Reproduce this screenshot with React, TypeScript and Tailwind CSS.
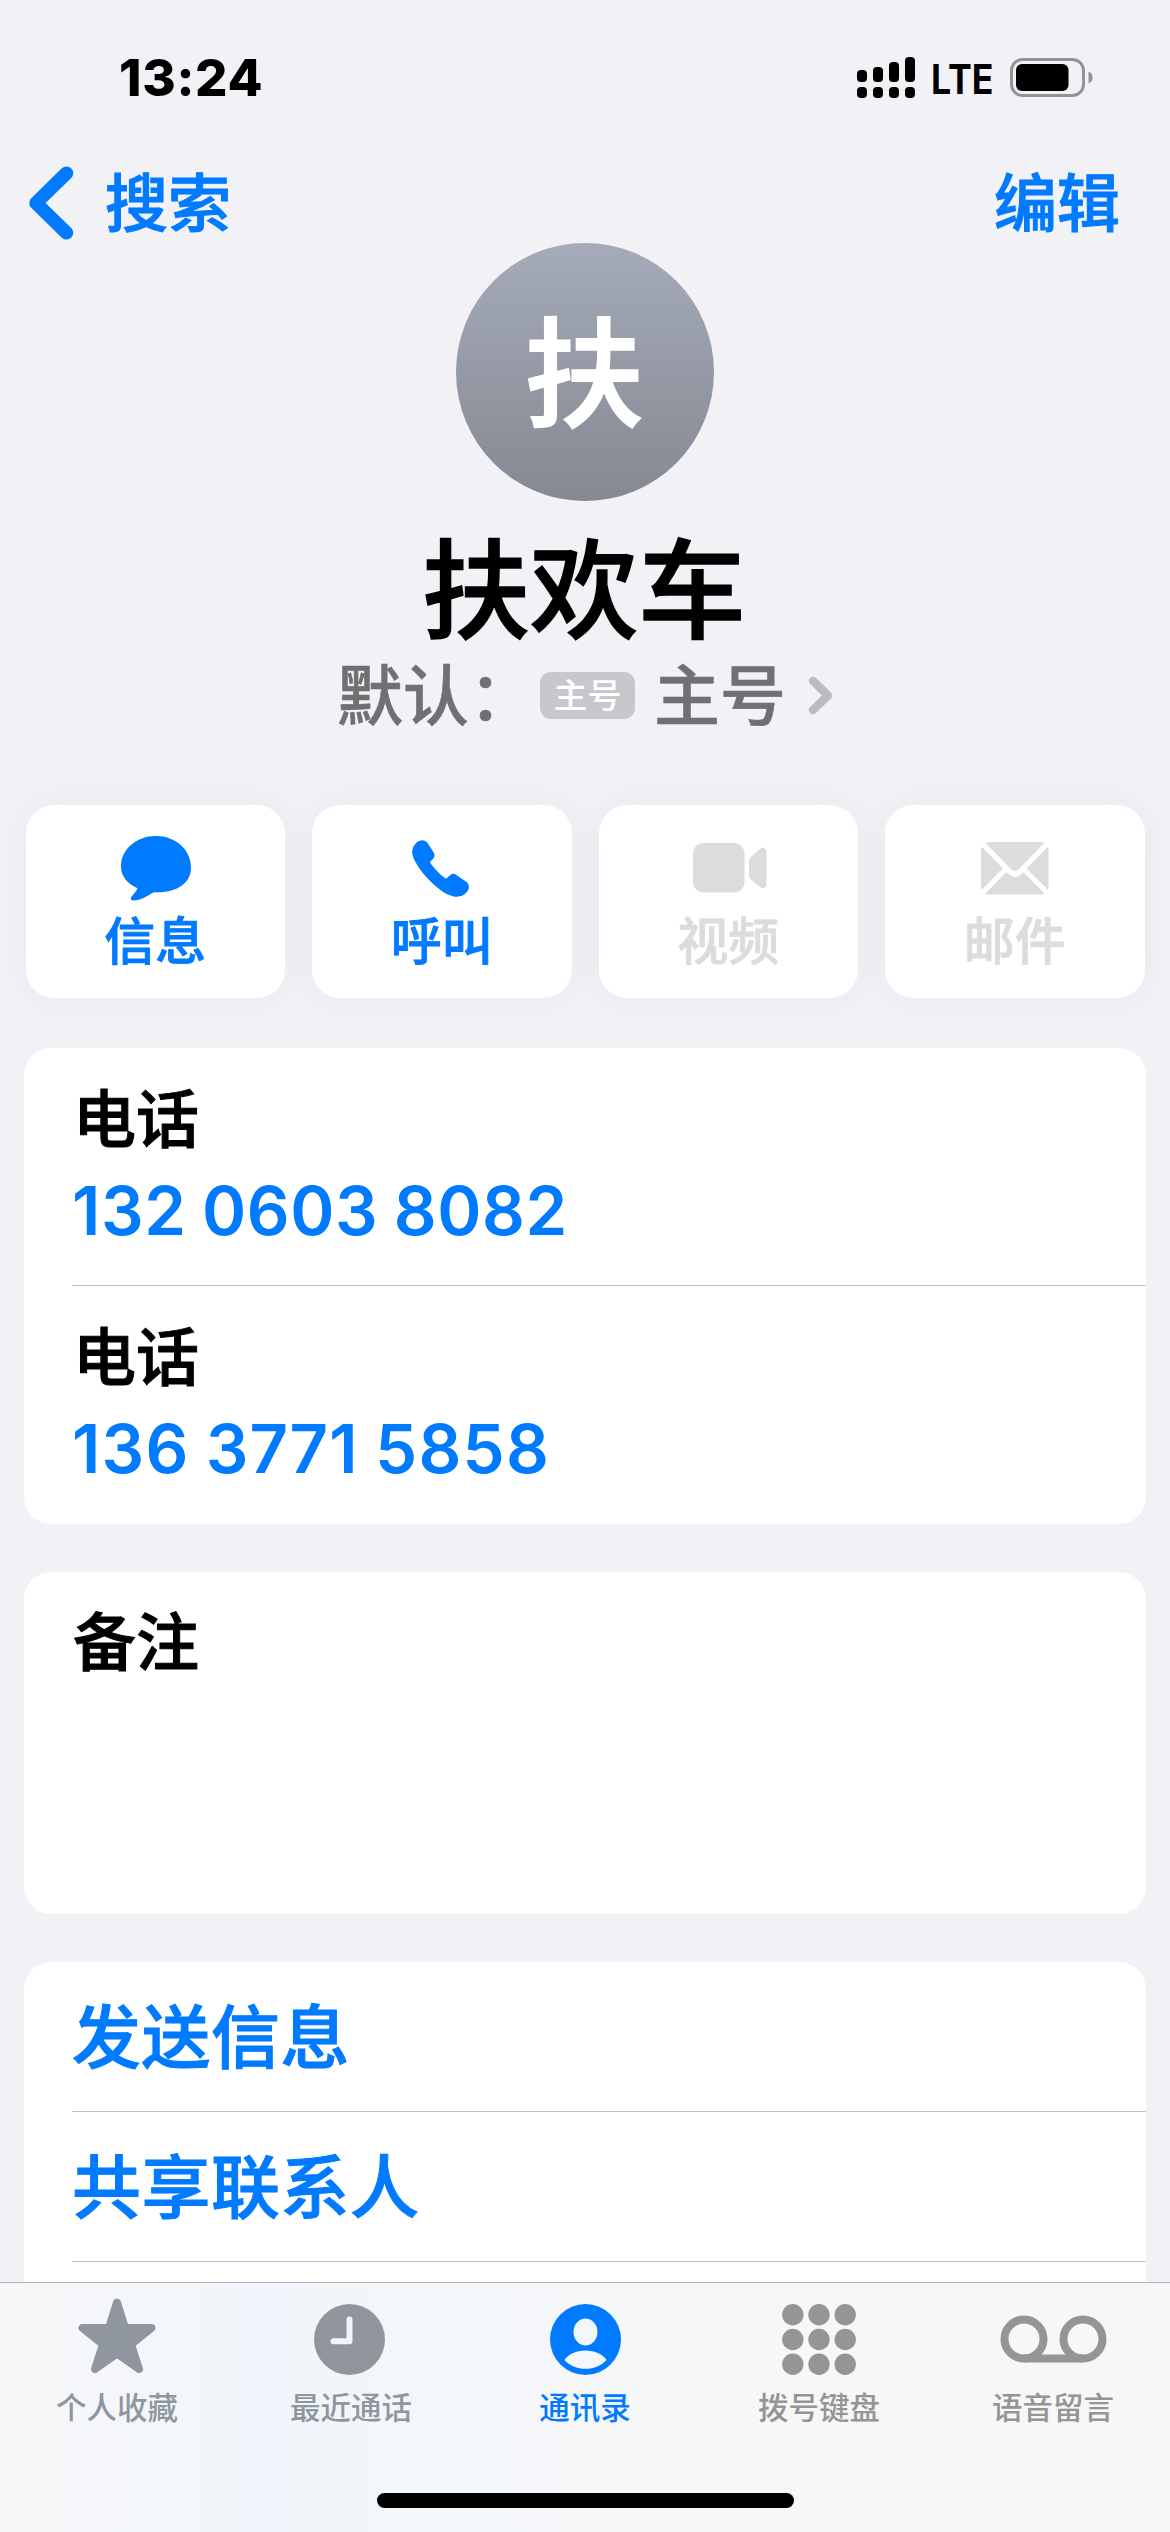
import type { ReactNode } from "react";
import { clsx } from "clsx";

const actions: { label: string; icon: ReactNode; enabled: boolean }[] = [
  { label: "信息", icon: <BubbleIcon />, enabled: true },
  { label: "呼叫", icon: <PhoneIcon />, enabled: true },
  { label: "视频", icon: <VideoIcon />, enabled: false },
  { label: "邮件", icon: <MailIcon />, enabled: false },
];

const phones = [
  { number: "132 0603 8082", tracking: "tracking-[0.600px]" },
  { number: "136 3771 5858", tracking: "tracking-[1.250px]" },
];

const links = ["发送信息", "共享联系人"];

const tabs: { label: string; icon: ReactNode; color: string }[] = [
  { label: "个人收藏", icon: <StarIcon />, color: "text-[#90969f]" },
  { label: "最近通话", icon: <ClockIcon />, color: "text-[#91969d]" },
  { label: "通讯录", icon: <ContactIcon />, color: "text-[#007aff]" },
  { label: "拨号键盘", icon: <KeypadIcon />, color: "text-[#959595]" },
  { label: "语音留言", icon: <VoicemailIcon />, color: "text-[#959595]" },
];

function BubbleIcon() {
  return (
    <svg width="70" height="65" viewBox="0 0 70 65" fill="currentColor" className="ml-[1px]">
      <path d="M35 0C54.5 0 70 13.5 70 31.5C70 47 56 56.8 35.500 56.300C33 56.200 31.500 56.800 29.500 58C25 61 18 64.500 12.500 64.500C9.600 64.500 9 62.300 11 60C13.500 57.300 15.500 54.800 16.500 52.300C6 47.500 0 40 0 30.500C0 13.500 15 0 35 0Z" />
    </svg>
  );
}

function PhoneIcon() {
  return (
    <svg width="57" height="57" viewBox="0 0 57 57" fill="currentColor" className="ml-[-2px]">
      <path d="M4.200 2.900C7.500 -0.600 12.800 -0.900 15.300 2.800L21.400 12C23 14.500 22.800 17 20.800 19.200L18.700 21.300C18.200 22 18.200 22.600 18.600 23.300C20.300 26.400 29.500 36 32.800 38C33.600 38.500 34.400 38.500 35 37.900L38 35.200C40 33.500 42.200 33.400 44.400 34.900L54.300 41.800C57.800 44.400 57.700 49 54.500 52.600C48 59.700 37.500 57 27.500 49.200C15 39.500 3.500 25.500 0.700 15.500C-0.600 10.700 0.500 6.500 4.200 2.900Z" />
    </svg>
  );
}

function VideoIcon() {
  return (
    <svg width="74" height="50" viewBox="0 0 74 50" fill="currentColor" className="ml-[3px]">
      <rect width="51.500" height="49.500" rx="10.500" />
      <path d="M56 18.500Q56 16 58 14L67 6Q69.500 4 72 5.500Q73.500 6.500 73.500 9V41Q73.500 43.500 72 44.500Q69.500 46 67 44L58 36.500Q56 35 56 32.500Z" />
    </svg>
  );
}

function MailIcon() {
  return (
    <svg width="68" height="53" viewBox="0 0 68 53" fill="currentColor">
      <path d="M4.500 1Q6 0 8 0H60Q62 0 63.300 1L38 27Q34 31 30 27Z" />
      <path d="M4.500 51.500L25.500 30L28.800 33Q34 37 39.200 33L42.500 30L63.300 51.500Q62 52.500 60 52.500H8Q6 52.500 4.500 51.500Z" />
      <path d="M1 5L22 26.500L1 47.500Q0 46.500 0 44.500V8Q0 6 1 5Z" />
      <path d="M66.800 5L45.500 26.500L66.800 47.500Q67.500 46.500 67.500 44.500V8Q67.500 6 66.800 5Z" />
    </svg>
  );
}

function StarIcon() {
  return (
    <svg width="78" height="76" viewBox="0 0 78 76" fill="currentColor" stroke="currentColor" strokeWidth="8" strokeLinejoin="round" className="mb-[7px]">
      <path d="M39 4.500L47 30H73.500L53 46.500L61 71L39 55.500L17 71L25 46.500L4.500 30H31Z" />
    </svg>
  );
}

function ClockIcon() {
  return (
    <svg width="71" height="71" viewBox="0 0 71 71" className="ml-[-3px]">
      <circle cx="35.500" cy="35.500" r="35.500" fill="currentColor" />
      <path d="M35.500 15.500V37.300H19.500" fill="none" stroke="#f0f5fb" strokeWidth="6" strokeLinecap="round" strokeLinejoin="round" />
    </svg>
  );
}

function ContactIcon() {
  return (
    <svg width="71" height="71" viewBox="0 0 71 71">
      <circle cx="35.500" cy="35.500" r="35.500" fill="currentColor" />
      <ellipse cx="35.500" cy="28" rx="12" ry="13.500" fill="#f3f7fc" />
      <path d="M14.500 56C18 50.500 26 46.500 35.500 46.500S53 50.500 56.500 56C51.500 61.500 44 64.800 35.500 64.800S19.500 61.500 14.500 56Z" fill="#f3f7fc" />
    </svg>
  );
}

function KeypadIcon() {
  return (
    <svg width="74" height="71" viewBox="0 0 74 71" fill="currentColor">
      {[10.7, 35.5, 60.3].map((cy) =>
        [10.8, 37, 63.2].map((cx) => <circle key={`${cx}-${cy}`} cx={cx} cy={cy} r="10.700" />),
      )}
    </svg>
  );
}

function VoicemailIcon() {
  return (
    <svg width="107" height="48" viewBox="0 0 107 48" fill="none" stroke="currentColor" strokeWidth="8">
      <circle cx="24" cy="24" r="19.500" />
      <circle cx="83" cy="24" r="19.500" />
      <path d="M24 43.500H83" />
    </svg>
  );
}

function StatusBar() {
  return (
    <div className="flex h-[163px] items-start justify-between pt-[48px] pr-[77px] pl-[119px] font-['Inter',sans-serif] text-black">
      <span className="text-[51px] leading-[60px] font-extrabold tracking-[0.700px]">13:24</span>
      <div className="flex h-[60px] items-center">
        <svg width="58" height="42" viewBox="0 0 58 42" className="mr-[16px]">
          {[13, 10, 5, 0].map((top, i) => (
            <g key={top}>
              <rect x={i * 16} y={top} width="10" height={25 - top} rx="4" />
              <rect x={i * 16} y="30" width="10" height="11" rx="4" />
            </g>
          ))}
        </svg>
        <span className="mt-[2px] mr-[17px] w-[62px] origin-left scale-x-[0.87] text-[41px] leading-[60px] font-bold">LTE</span>
        <svg width="83" height="40" viewBox="0 0 83 40">
          <rect x="1.500" y="1.500" width="72" height="36" rx="11" fill="none" stroke="#929297" strokeWidth="3" />
          <rect x="6" y="6" width="52.500" height="27" rx="6" />
          <path d="M78.500 13.500Q82.500 15 82.500 19.500T78.500 25.500Z" fill="#929297" />
        </svg>
      </div>
    </div>
  );
}

function NavBar() {
  return (
    <div className="flex h-[80px] items-center justify-between pr-[50px] pl-[29px] text-[#007aff]">
      <button className="flex items-center">
        <svg width="45" height="74" viewBox="0 0 45 74" fill="none" stroke="currentColor" strokeWidth="13.500" strokeLinecap="round" strokeLinejoin="round">
          <path d="M37.500 7.200L7 37L37.500 66.800" />
        </svg>
        <span className="mb-[9px] ml-[31px] text-[63px] leading-[80px] font-medium [-webkit-text-stroke:1px_currentColor]">搜索</span>
      </button>
      <button className="mb-[9px] text-[63px] leading-[80px] font-medium [-webkit-text-stroke:1px_currentColor]">编辑</button>
    </div>
  );
}

function ContactHeader() {
  return (
    <div className="flex h-[562px] flex-col items-center">
      <div className="flex size-[258px] items-center justify-center rounded-full bg-linear-to-b from-[#a5abb9] to-[#858992] pr-[2px] pb-[13px] text-[119px] leading-[120px] font-medium text-white [-webkit-text-stroke:2px_currentColor]">
        扶
      </div>
      <h1 className="mt-[22px] mr-[2px] text-[108px] leading-[120px] font-medium text-black [-webkit-text-stroke:1.4px_currentColor]">扶欢车</h1>
      <div className="mt-[8px] flex h-[80px] w-[496px] items-center text-[66px] leading-[80px] font-medium text-[#707072] [-webkit-text-stroke:0.6px_currentColor]">
        <span className="w-[203px]">默认：</span>
        <span className="mt-[9px] flex h-[47px] w-[95px] shrink-0 items-center justify-center rounded-[11px] bg-[#c7c7cc] pb-[4px] text-[34px] leading-[40px] text-white [-webkit-text-stroke:0px]">
          主号
        </span>
        <span className="ml-[19px] shrink-0">主号</span>
        <svg width="25" height="39" viewBox="0 0 25 39" className="mt-[9px] ml-[22px] shrink-0" fill="none" stroke="#bcbcc0" strokeWidth="8.500" strokeLinecap="round" strokeLinejoin="round">
          <path d="M5 5L20 19.500L5 34" />
        </svg>
      </div>
    </div>
  );
}

function ActionRow() {
  return (
    <div className="flex gap-[27px] px-[25.500px]">
      {actions.map(({ label, icon, enabled }) => (
        <button
          key={label}
          className={clsx(
            "flex h-[193px] flex-1 flex-col items-center rounded-[28px] bg-white shadow-[0_0_36px_rgba(60,50,90,0.05)]",
            enabled ? "text-[#007aff]" : "text-[#dcdcde]",
          )}
        >
          <span className="mt-[28px] flex h-[70px] items-center">{icon}</span>
          <span className="mt-[5px] text-[51px] leading-[60px] font-medium [-webkit-text-stroke:0.8px_currentColor]">{label}</span>
        </button>
      ))}
    </div>
  );
}

function Card({ children, className }: { children?: ReactNode; className?: string }) {
  return <section className={clsx("mx-[24px] rounded-[27px] bg-white pl-[48px]", className)}>{children}</section>;
}

function FieldLabel({ children }: { children: ReactNode }) {
  return (
    <div className="ml-[1px] text-[63px] leading-[70px] font-medium text-black [-webkit-text-stroke:1px_currentColor]">{children}</div>
  );
}

function TabBar() {
  return (
    <nav className="relative h-[250px] shrink-0 border-t border-[#b2b3b8] bg-linear-to-r from-[#f7f7f8] via-[#f1f6fc] via-22% to-[#f7f7f7] to-65%">
      <div className="grid grid-cols-5">
        {tabs.map(({ label, icon, color }) => (
          <button key={label} className={clsx("flex flex-col items-center", color)}>
            <span className="mt-[16px] flex h-[80px] items-center">{icon}</span>
            <span className="mt-[7px] text-[30.500px] leading-[40px] font-medium">{label}</span>
          </button>
        ))}
      </div>
      <div className="absolute bottom-[24px] left-[377px] h-[15px] w-[417px] rounded-full bg-black" />
    </nav>
  );
}

export default function App() {
  return (
    <div className="flex h-[2532px] w-[1170px] flex-col overflow-hidden bg-[#f1f1f6] font-['Noto_Sans_CJK_SC',sans-serif]">
      <main className="h-[2282px] overflow-hidden">
        <StatusBar />
        <NavBar />
        <ContactHeader />
        <ActionRow />

        <Card className="mt-[50px]">
          {phones.map(({ number, tracking }) => (
            <div key={number} className="h-[238px] border-b border-[#c0c0c3] pt-[32px] last:border-b-0">
              <FieldLabel>电话</FieldLabel>
              <div
                className={clsx(
                  "mt-[21px] font-['Inter',sans-serif] text-[67px] leading-[80px] font-semibold text-[#007aff] [font-kerning:none] [word-spacing:-2px]",
                  tracking,
                )}
              >
                {number}
              </div>
            </div>
          ))}
        </Card>

        <Card className="mt-[48px] h-[342px] pt-[31px]">
          <FieldLabel>备注</FieldLabel>
        </Card>

        <Card className="mt-[48px] h-[400px]">
          {links.map((link) => (
            <div
              key={link}
              className="h-[150px] border-b border-[#c0c0c3] pt-[31px] text-[69px] leading-[80px] font-medium tracking-[0.500px] text-[#007aff] [-webkit-text-stroke:1px_currentColor]"
            >
              {link}
            </div>
          ))}
        </Card>
      </main>
      <TabBar />
    </div>
  );
}
